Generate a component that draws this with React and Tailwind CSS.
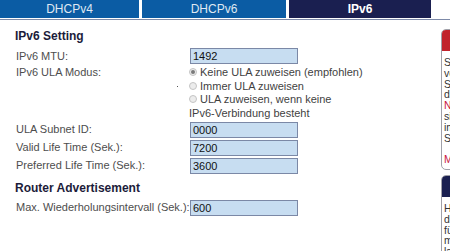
import React from "react";

const font = { fontFamily: '"Liberation Sans", Arial, sans-serif' };

function Field({ label, value }) {
  return (
    <div className="flex items-center h-[16px] mb-[2px]">
      <div className="w-[174px] text-[11px] text-[#4d4d4d] leading-none">{label}</div>
      <div className="w-[108px] h-[16px] bg-[#c7ddf1] border border-[#7b88a6] text-[11px] text-[#111] leading-[14px] pl-[2px]">
        {value}
      </div>
    </div>
  );
}

function Radio({ checked, label }) {
  return (
    <div className="flex items-center h-[13.5px]">
      <span className="w-[8px] h-[8px] rounded-full border border-[#c4c4c4] bg-[#ececec] flex items-center justify-center mr-[3px]">
        {checked && <span className="w-[4px] h-[4px] rounded-full bg-[#7a7a7a]" />}
      </span>
      <span>{label}</span>
    </div>
  );
}

function SidePanel({ header, lines, top }) {
  return (
    <div className={`w-[180px] border border-[#a0a0a8] rounded-l-[5px] overflow-hidden ${top}`}>
      <div className={`${header} h-[21px]`} />
      <div className="pl-[2px] pt-[6px] pb-[4px] text-[10.5px] leading-[10.8px] text-[#333]">
        {lines.map((l, i) => (
          <div key={i} className={l.red ? "text-[#c8143c] h-[10.8px]" : "h-[10.8px]"}>
            {l.t}
          </div>
        ))}
      </div>
    </div>
  );
}

export default function App() {
  const tabs = [
    { name: "DHCPv4", w: "w-[139px]", active: false },
    { name: "DHCPv6", w: "w-[144px]", active: false },
    { name: "IPv6", w: "w-[142px]", active: true },
  ];

  return (
    <div className="w-[450px] h-[251px] overflow-hidden bg-white relative" style={font}>
      {/* tab bar */}
      <div className="flex gap-[3px] h-[18px]">
        {tabs.map((t) => (
          <div
            key={t.name}
            className={`${t.w} h-[18px] flex items-center justify-center text-[12px] ${
              t.active ? "bg-[#1a1f50] text-white font-bold" : "bg-[#0b5ca4] text-[#dfe8f2]"
            }`}
          >
            {t.name}
          </div>
        ))}
      </div>
      <div className="h-[1px] mt-[1px] bg-[#7d8aa8]" />

      <div className="flex">
        {/* main settings */}
        <div className="w-[441px] pl-[16px] shrink-0">
          <div className="mt-[9px] ml-[-1px] text-[12px] font-bold leading-[14px] text-[#1c1c3a]">IPv6 Setting</div>
          <div className="mt-[5px]">
            <Field label="IPv6 MTU:" value="1492" />
          </div>
          <div className="flex -mt-[0.5px]">
            <div className="w-[174px] relative">
              <div className="text-[11px] text-[#4d4d4d] h-[13.5px] flex items-center">IPv6 ULA Modus:</div>
              <span className="absolute left-[161px] top-[20px] w-[1px] h-[1px] bg-[#555]" />
            </div>
            <div className="text-[11px] text-[#3f3f3f] ml-[-1px]">
              <Radio checked label="Keine ULA zuweisen (empfohlen)" />
              <Radio label="Immer ULA zuweisen" />
              <Radio label="ULA zuweisen, wenn keine" />
              <div className="h-[13.5px] flex items-center">IPv6-Verbindung besteht</div>
            </div>
          </div>
          <div className="mt-[2px]">
            <Field label="ULA Subnet ID:" value="0000" />
            <Field label="Valid Life Time (Sek.):" value="7200" />
            <Field label="Preferred Life Time (Sek.):" value="3600" />
          </div>
          <div className="mt-[7px] ml-[-1px] text-[12px] font-bold leading-[14px] text-[#1c1c3a]">Router Advertisement</div>
          <div className="mt-[5px]">
            <Field label="Max. Wiederholungsintervall (Sek.):" value="600" />
          </div>
        </div>

        {/* help column */}
        <div className="flex flex-col shrink-0">
          <SidePanel
            top="mt-[9px]"
            header="bg-[#c1232c]"
            lines={[
              { t: "Sie können hier" },
              { t: "verschiedene" },
              { t: "Sicherheits-" },
              { t: "dienste nutzen." },
              { t: "Nur für Profis", red: true },
              { t: "sinnvoll, da" },
              { t: "im Zweifel" },
              { t: "Störungen" },
              { t: "" },
              { t: "Mehr", red: true },
            ]}
          />
          <SidePanel
            top="mt-[5px]"
            header="bg-[#1a1f50]"
            lines={[
              { t: "Hier können Sie" },
              { t: "die Werte" },
              { t: "für IPv6" },
              { t: "manuell" },
              { t: "lassen." },
            ]}
          />
        </div>
      </div>
    </div>
  );
}
